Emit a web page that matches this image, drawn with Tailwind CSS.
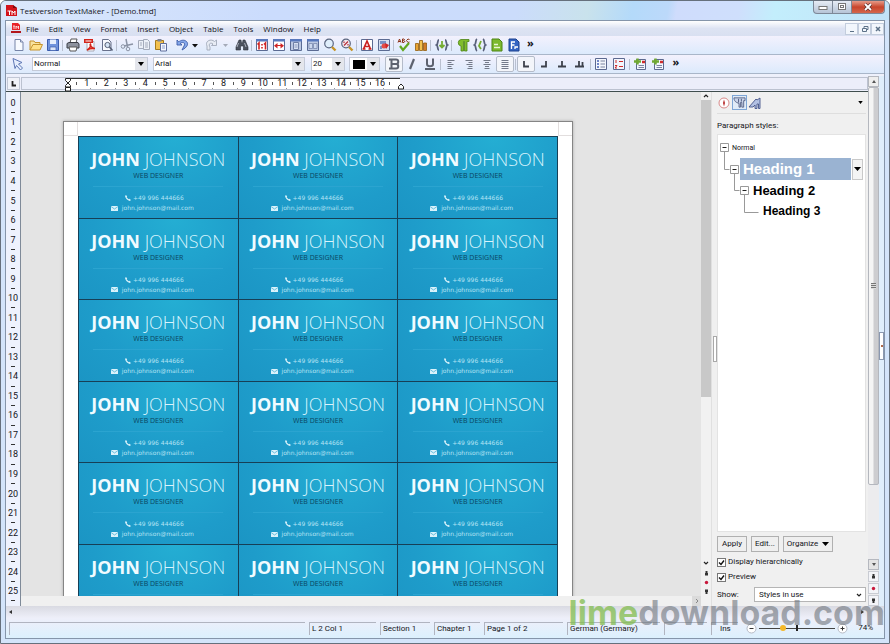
<!DOCTYPE html>
<html lang="en">
<head>
<meta charset="utf-8">
<title>Testversion TextMaker - [Demo.tmd]</title>
<script src="https://cdn.jsdelivr.net/npm/@tailwindcss/browser@4"></script>
</head>
<body class="bg-white font-['Open_Sans',sans-serif] text-[8px] leading-3 text-[#14141a]">
<div class="relative flex h-screen flex-col overflow-hidden rounded-t-md border border-[#66707c] bg-[#d3e4fa] pr-[4px] pb-[4px] pl-[4px]">

  <header class="-mx-1 flex h-[19px] shrink-0 items-center bg-[linear-gradient(100deg,#dbe8fb_0%,#cbdcfd_30%,#cbdcfb_58%,#c9e2ec_66%,#b4dafa_71%,#bcd9fa_75%,#cfdcfc_76%,#cfdffc_83%,#c3eefc_87%,#c2e3f8_100%)] pl-[5px]">
    <svg class="h-[11px] w-[11px]" viewBox="0 0 11 11"><path d="M0 0h7l4 3v8H0z" fill="#d3131b"/><path d="M7 0l4 3H7z" fill="#7d0a0e"/><path d="M1.500 6h4M3.500 6v4M6 10V6l1.500 2L9 6v4" stroke="#fff" fill="none"/></svg>
    <h1 class="ml-[3px] text-[8px]">Testversion TextMaker - [Demo.tmd]</h1>
    <div class="mr-[4px] ml-auto flex h-[13px] self-start rounded-b-sm border border-t-0 border-[#7d8897] bg-linear-to-b from-[#e6ecf4] to-[#b6c4d6]">
      <button aria-label="Minimize" class="flex w-[19px] items-center justify-center border-r border-[#7d8897]"><svg class="h-2 w-3" viewBox="0 0 12 8"><rect x="2" y="3.500" width="8" height="3" fill="#fff" stroke="#777"/></svg></button>
      <button aria-label="Restore" class="flex w-[19px] items-center justify-center border-r border-[#7d8897]"><svg class="h-2 w-3" viewBox="0 0 12 8"><rect x="2.500" y=".5" width="7" height="6" fill="#fff" stroke="#777"/><rect x="4.500" y="2.500" width="3" height="2" fill="#fff" stroke="#777"/></svg></button>
      <button aria-label="Close" class="flex w-[32px] items-center justify-center rounded-br-sm bg-linear-to-b from-[#e59a88] via-[#c8442b] to-[#d4664c]"><svg class="h-2 w-3" viewBox="0 0 12 8"><path d="M3 1l6 6M9 1L3 7" stroke="#5a3030" stroke-width="3.200"/><path d="M3 1l6 6M9 1L3 7" stroke="#fff" stroke-width="1.800"/></svg></button>
    </div>
  </header>

  <div class="flex min-h-0 flex-1 flex-col border border-[#8595aa] bg-[#eef1fc]">
    <nav class="flex h-[15px] shrink-0 items-center bg-linear-to-b from-white via-[#dde3f3] to-[#d9e0f1] pl-[5px]" aria-label="Menu">
      <svg class="mr-[5px] h-[11px] w-[10px]" viewBox="0 0 10 11"><path d="M1 0h6l2 2v5H1z" fill="#e8242a"/><path d="M0 8h10v2H0z" fill="#b3151b"/><path d="M2 3h2M3 3v3M5 6V3l1.200 1.500L7.500 3v3" stroke="#fff" stroke-width=".8" fill="none"/></svg>
      <div class="flex gap-[10px]">
        <a href="#">File</a><a href="#">Edit</a><a href="#">View</a><a href="#">Format</a><a href="#">Insert</a><a href="#">Object</a><a href="#">Table</a><a href="#">Tools</a><a href="#">Window</a><a href="#">Help</a>
      </div>
      <div class="ml-auto flex text-[#5d7288]">
        <button aria-label="Minimize document" class="flex h-3 w-[13px] items-center justify-center border border-[#c3cddd] bg-[#f2f6fc]"><svg class="h-2 w-2" viewBox="0 0 8 8"><path d="M2 6.500h4" stroke="currentColor"/></svg></button>
        <button aria-label="Restore document" class="flex h-3 w-[13px] items-center justify-center border border-[#c3cddd] bg-[#f2f6fc]"><svg class="h-2 w-2" viewBox="0 0 8 8"><path d="M3 3V1.500h4v3H5.500M1.500 3.500h4v3h-4z" fill="none" stroke="currentColor"/></svg></button>
        <button aria-label="Close document" class="flex h-3 w-[13px] items-center justify-center border border-[#c3cddd] bg-[#f2f6fc]"><svg class="h-2 w-2" viewBox="0 0 8 8"><path d="M2 2l4 4M6 2L2 6" stroke="currentColor" stroke-width="1.500"/></svg></button>
      </div>
    </nav>

    <div role="toolbar" aria-label="Standard" class="flex h-[19px] shrink-0 items-center border-b border-[#a9b6c9] bg-linear-to-b from-[#f3f1fd] to-[#dceafc] pl-[4px] [&>button]:flex [&>button]:h-4 [&>button]:w-[17px] [&>button]:items-center [&>button]:justify-center [&>i]:mx-[1px] [&>i]:h-[11px] [&>i]:w-px [&>i]:bg-[#b9c0cf] [&_svg]:h-[14px] [&_svg]:w-[14px]">
      <button aria-label="New"><svg viewBox="0 0 14 14"><path d="M3 1.500h5.500l2.500 2.500v8.500H3z" fill="#f8faff" stroke="#7684a8"/><path d="M8.500 1.500V4H11" fill="#dfe6f5" stroke="#7684a8"/></svg></button>
      <button aria-label="Open"><svg viewBox="0 0 14 14"><path d="M1 12V3h4l1 1.500h5V7" fill="#f8e3a0" stroke="#c6942e"/><path d="M1 12l3-5.500h9.500L11 12z" fill="#ffe28a" stroke="#c6942e"/></svg></button>
      <button aria-label="Save"><svg viewBox="0 0 14 14"><path d="M1.500 1.500h11v11h-11z" fill="#6f93dc" stroke="#3a5cae"/><path d="M4 1.500h6V6H4z" fill="#e5eefc"/><path d="M4 9h6v3.500H4z" fill="#dce6f8" stroke="#3a5cae" stroke-width=".7"/></svg></button>
      <i></i>
      <button aria-label="Print"><svg viewBox="0 0 14 14"><path d="M4 5l1-4h6l-1 4" fill="#fff" stroke="#555"/><path d="M1 5.500l2-1h9l1 1.500v4H1z" fill="#8d929e" stroke="#3b3e47"/><path d="M3 9h8l-1 4H4z" fill="#fff" stroke="#555"/></svg></button>
      <button aria-label="Export PDF"><svg viewBox="0 0 14 14"><path d="M4 3.500h7V13H4z" fill="#fff" stroke="#a9a9b5"/><path d="M1 1h9v4H1z" fill="#d3241c"/><path d="M4 12c3-2 4.500-4 3.500-6-1.500 1 1.500 4.500 4.500 4.500-3-.3-5.500 0-8 1.500z" fill="none" stroke="#d3241c" stroke-width="1.500"/><path d="M2.500 3h6" stroke="#fff"/></svg></button>
      <button aria-label="Print preview"><svg viewBox="0 0 14 14"><path d="M2.500 1.500h6L11 4v8.500H2.500z" fill="#f8faff" stroke="#68718c"/><circle cx="7.500" cy="7" r="2.600" fill="#d5e4f5" stroke="#555f75"/><path d="M9.500 9l3 3.500" stroke="#555f75" stroke-width="1.600"/></svg></button>
      <i></i>
      <button aria-label="Cut"><svg viewBox="0 0 14 14" fill="none" stroke="#8b93a5"><path d="M6 1l1.500 8M13 6L4 8" stroke-width="1.500"/><circle cx="3" cy="8.500" r="1.800"/><circle cx="8" cy="11" r="1.800"/></svg></button>
      <button aria-label="Copy"><svg viewBox="0 0 14 14" fill="#eceff7" stroke="#a4aaba"><path d="M1.500 2.500h5v8h-5zM6.500 1.500h4l2 2v8h-6z"/><path d="M8 5h3M8 7h3M8 9h3M3 5h2M3 7h2"/></svg></button>
      <button aria-label="Paste"><svg viewBox="0 0 14 14"><path d="M1.500 2.500h8v9h-8z" fill="#f2c04e" stroke="#a57a1d"/><path d="M3.500 1h4v2.500h-4z" fill="#7e869b"/><path d="M6.500 5.500h6V13h-6z" fill="#f5f8ff" stroke="#5f6f9c"/><path d="M8 8h3M8 10h3" stroke="#8fa0cd"/></svg></button>
      <button aria-label="Undo" class="ml-1"><svg viewBox="0 0 14 14"><path d="M2 2v5h5L5.200 5.300C8 3.500 11 5 9 8l-2 4c5-2.500 7-6 4.500-8.500C9.500 1.500 6 2 3.800 3.800z" fill="#86a8ea" stroke="#3d5ca8" stroke-width=".9"/></svg></button>
      <button aria-label="Undo list" class="-mx-1"><svg viewBox="0 0 14 14"><path d="M4 6h6l-3 3.500z" fill="#111"/></svg></button>
      <button aria-label="Redo" class="ml-1"><svg viewBox="0 0 14 14"><path d="M2 12V8C0 4 4 1 8 2.500l1.500 1L11.500 2v5.500h-5L8 6C5.500 4 3 6 5 9v3z" fill="#e7ebf4" stroke="#a2a9b9" stroke-width=".9"/></svg></button>
      <button aria-label="Redo list" class="-mx-1"><svg viewBox="0 0 14 14"><path d="M5 6h5L7.500 9z" fill="#a4aab8"/></svg></button>
      <button aria-label="Search" class="ml-[4px]"><svg viewBox="0 0 14 14"><path d="M4 2h2l.5 3h1L8 2h2l3 7v3H8.500V8h-3v4H1V9z" fill="#4d5360" stroke="#2d313a" stroke-width=".6"/><path d="M3.500 5L2 9M9.500 5L11 9" stroke="#aab0bd"/></svg></button>
      <i></i>
      <button aria-label="Original size"><svg viewBox="0 0 14 14"><path d="M1.500 1.500h11v11h-11z" fill="#fff" stroke="#5b6b93"/><path d="M1 1h12v2.500H1z" fill="#5878bd"/><path d="M2.500 6.500L4 5v6.500M9 6.500L10.500 5v6.500M7 6v1.500M7 9v1.500" stroke="#d02424" stroke-width="1.600" fill="none"/></svg></button>
      <button aria-label="Fit width"><svg viewBox="0 0 14 14"><path d="M1.500 1.500h11v11h-11z" fill="#fff" stroke="#5b6b93"/><path d="M1 1h12v2.500H1z" fill="#5878bd"/><path d="M5.500 5v5.500L2 7.700zM8.500 5v5.500L12 7.700z" fill="#d02424"/><path d="M3 7.500h8" stroke="#d02424"/></svg></button>
      <button aria-label="Fit page"><svg viewBox="0 0 14 14"><path d="M1.500 1.500h11v11h-11z" fill="#bcc8e2" stroke="#5b6b93"/><path d="M1 1h12v2.500H1z" fill="#5878bd"/><path d="M4.500 4.500h5v7h-5z" fill="#d9e2f3" stroke="#7080a6"/><path d="M5.500 7h3M5.500 9h3" stroke="#8c9abd"/></svg></button>
      <button aria-label="Two pages"><svg viewBox="0 0 14 14"><path d="M1.500 1.500h11v11h-11z" fill="#bcc8e2" stroke="#5b6b93"/><path d="M1 1h12v2.500H1z" fill="#5878bd"/><path d="M3 5.500h3.500v5H3zM7.500 5.500H11v5H7.500z" fill="#cdd8ee" stroke="#7080a6" stroke-width=".7"/></svg></button>
      <button aria-label="Zoom"><svg viewBox="0 0 14 14"><circle cx="6" cy="5.500" r="4.300" fill="#dfeefb" stroke="#5b6680" stroke-width="1.200"/><path d="M9 9l3.500 3.500" stroke="#c79325" stroke-width="2.400"/></svg></button>
      <button aria-label="Zoom level"><svg viewBox="0 0 14 14"><circle cx="6" cy="5.500" r="4.300" fill="#f3e9ee" stroke="#5b6680" stroke-width="1.200"/><path d="M4 7.500l4-4M4 3.500v1.500M8 6v1.500" stroke="#b52e38" stroke-width="1.200"/><path d="M9 9l3.500 3.500" stroke="#c79325" stroke-width="2.400"/></svg></button>
      <i></i>
      <button aria-label="Text frame"><svg viewBox="0 0 14 14"><path d="M1.500 1.500h11v11h-11z" fill="#fff" stroke="#5b6b93"/><path d="M3.500 11L7 3l3.500 8M5 8.500h4M2.500 11h3M8.500 11h3" stroke="#cb2020" stroke-width="1.700" fill="none"/></svg></button>
      <button aria-label="Picture frame"><svg viewBox="0 0 14 14"><path d="M1.500 1.500h11v11h-11z" fill="#d5def0" stroke="#5b6b93"/><path d="M3 3h6v3H3zM3 8h2v3H3z" fill="#7791c6"/><circle cx="7" cy="8" r="2.500" fill="#e34c46"/><path d="M8 5l4 2-3 4z" fill="#d02424"/></svg></button>
      <i></i>
      <button aria-label="Spelling"><svg viewBox="0 0 14 14"><path d="M1 4.500L2.500 1 4 4.500M1.500 3.500h2M5.500 1v3.500h1.500L8 3.500 6.500 2.700 7.500 1.500 7 1zM12.500 1.500L11 1l-1.500 1.500L11 4.500l1.500-.5" fill="none" stroke="#8c3218"/><path d="M3 8l3 4 6-7" fill="none" stroke="#63a821" stroke-width="2.200"/></svg></button>
      <button aria-label="Chart"><svg viewBox="0 0 14 14"><path d="M1.500 5.500h3v7h-3z" fill="#e8a434" stroke="#925d0e" stroke-width=".8"/><path d="M5.500 2.500h3v10h-3z" fill="#f2c14c" stroke="#925d0e" stroke-width=".8"/><path d="M9.500 5h3v7.500h-3z" fill="#d27c28" stroke="#925d0e" stroke-width=".8"/></svg></button>
      <i></i>
      <button aria-label="Update fields" class="ml-px"><svg viewBox="0 0 14 14" fill="none" stroke="#58607a" stroke-width="1.800"><path d="M4 2C2 2 3.500 6 1.500 7 3.500 8 2 12 4 12M10 2c2 0 .5 4 2.500 5-2 1-.5 5-2.500 5"/><path d="M7 3v6M4.500 7L7 9.500 9.500 7" stroke="#76ac32"/></svg></button>
      <i></i>
      <button aria-label="Show paragraph marks" class="ml-px"><svg viewBox="0 0 14 14"><path d="M13 1.500H5a3.300 3.300 0 0 0 0 6.500v5h2.500V3.500h1V13H11V3.500h2z" fill="#80bd2b" stroke="#4d8415" stroke-width=".8"/></svg></button>
      <button aria-label="Show fields"><svg viewBox="0 0 14 14" fill="none" stroke="#58607a" stroke-width="1.800"><path d="M4 1C2 2 3.500 6 1.500 7 3.500 8 2 12 4 13M10 1c2 1 .5 5 2.500 6-2 1-.5 5-2.500 6"/><path d="M8 3L6 8l2 3" stroke="#76ac32"/></svg></button>
      <button aria-label="PlanMaker"><svg viewBox="0 0 14 14"><path d="M2 1h7l3 3v9H2z" fill="#7cb92d" stroke="#4d8415"/><path d="M4 6.500h4M4 9.500h6" stroke="#e8f6d2" stroke-width="1.600"/></svg></button>
      <button aria-label="Presentations"><svg viewBox="0 0 14 14"><path d="M2 1h7l3 3v9H2z" fill="#3465c2" stroke="#1c408d"/><path d="M4.500 11V4H8M4.500 7h3M8 11V9h3" fill="none" stroke="#fff" stroke-width="1.300"/></svg></button>
      <button aria-label="More buttons" class="pb-[5px] text-[11px] font-bold">»</button>
    </div>

    <div role="toolbar" aria-label="Formatting" class="flex h-[19px] shrink-0 items-center border-b border-[#a9b6c9] bg-linear-to-b from-[#f3f1fd] to-[#dceafc] pl-[3px] [&>button]:flex [&>button]:h-4 [&>button]:w-[18px] [&>button]:items-center [&>button]:justify-center [&>i]:mx-[1px] [&>i]:h-[11px] [&>i]:w-px [&>i]:bg-[#b9c0cf] [&>button>svg]:h-[14px] [&>button>svg]:w-[14px]">
      <button aria-label="Object mode"><svg viewBox="0 0 14 14"><path d="M2 1.500l9 4-3.500 1.500 4 4-2 2-4-4.500L4 11.500z" fill="#e6edfc" stroke="#5d76b4"/></svg></button>
      <label class="ml-[5px] grid w-[116px] items-center border border-[#c4cad8] bg-white"><select aria-label="Paragraph style" class="col-start-1 row-start-1 h-3 w-full appearance-none pl-px font-['Roboto',sans-serif]"><option>Normal</option></select><span class="pointer-events-none col-start-1 row-start-1 flex h-3 w-3 items-center justify-center justify-self-end bg-[#e4e6ec]"><svg class="h-1 w-[6px]" viewBox="0 0 6 4"><path d="M0 0h6L3 4z"/></svg></span></label>
      <label class="ml-[5px] grid w-[152px] items-center border border-[#c4cad8] bg-white"><select aria-label="Font" class="col-start-1 row-start-1 h-3 w-full appearance-none pl-px font-['Roboto',sans-serif]"><option>Arial</option></select><span class="pointer-events-none col-start-1 row-start-1 flex h-3 w-3 items-center justify-center justify-self-end bg-[#e4e6ec]"><svg class="h-1 w-[6px]" viewBox="0 0 6 4"><path d="M0 0h6L3 4z"/></svg></span></label>
      <label class="ml-[6px] grid w-[34px] items-center border border-[#c4cad8] bg-white"><select aria-label="Font size" class="col-start-1 row-start-1 h-3 w-full appearance-none pl-px font-['Roboto',sans-serif]"><option>20</option></select><span class="pointer-events-none col-start-1 row-start-1 flex h-3 w-3 items-center justify-center justify-self-end bg-[#e4e6ec]"><svg class="h-1 w-[6px]" viewBox="0 0 6 4"><path d="M0 0h6L3 4z"/></svg></span></label>
      <label class="ml-[4px] grid w-[31px] items-center border border-[#c4cad8] bg-white"><select aria-label="Text color" class="col-start-1 row-start-1 h-3 w-full appearance-none text-transparent"><option></option></select><span class="pointer-events-none col-start-1 row-start-1 ml-[3px] h-[9px] w-[12px] bg-black"></span><span class="pointer-events-none col-start-1 row-start-1 flex h-3 w-3 items-center justify-center justify-self-end bg-[#e4e6ec]"><svg class="h-1 w-[6px]" viewBox="0 0 6 4"><path d="M0 0h6L3 4z"/></svg></span></label>
      <button aria-label="Bold" class="ml-[5px] rounded-xs border border-[#b4bbc9] bg-[#f3f5fa]"><svg viewBox="0 0 14 14"><path d="M2 2.500h7a2 2 0 0 1 0 4.500H5.500 9a2.200 2.200 0 0 1 0 4.500H2M4.500 2.500v9" fill="none" stroke="#5d626f" stroke-width="2"/></svg></button>
      <button aria-label="Italic"><svg viewBox="0 0 14 14"><path d="M9 2L5 12" stroke="#5d626f" stroke-width="2.200"/></svg></button>
      <button aria-label="Underline"><svg viewBox="0 0 14 14"><path d="M4 1.500V7c0 3 6 3 6 0V1.500M2 12h10" fill="none" stroke="#5d626f" stroke-width="2"/></svg></button>
      <i></i>
      <button aria-label="Align left"><svg viewBox="0 0 14 14" stroke="#747a89"><path d="M3.500 3.500h7M3.500 5.500h4M3.500 7.500h6M3.500 9.500h4M3.500 11.500h5"/></svg></button>
      <button aria-label="Align right"><svg viewBox="0 0 14 14" stroke="#747a89"><path d="M3.500 3.500h7M6.500 5.500h4M4.500 7.500h6M6.500 9.500h4M5.500 11.500h5"/></svg></button>
      <button aria-label="Center"><svg viewBox="0 0 14 14" stroke="#747a89"><path d="M3.500 3.500h7M5 5.500h4M3.500 7.500h7M5 9.500h4M4.500 11.500h5"/></svg></button>
      <button aria-label="Justify" class="rounded-xs border border-[#b4bbc9] bg-[#f3f5fa]"><svg viewBox="0 0 14 14" stroke="#747a89"><path d="M3.500 3.500h7M3.500 5.500h7M3.500 7.500h7M3.500 9.500h7M3.500 11.500h7"/></svg></button>
      <i></i>
      <button aria-label="Left tab" class="rounded-xs border border-[#b4bbc9] bg-[#f3f5fa]"><svg viewBox="0 0 14 14"><path d="M5 4v5.500h5" fill="none" stroke="#3d414b" stroke-width="1.800"/></svg></button>
      <button aria-label="Right tab"><svg viewBox="0 0 14 14"><path d="M9 4v5.500H4" fill="none" stroke="#3d414b" stroke-width="1.800"/></svg></button>
      <button aria-label="Center tab"><svg viewBox="0 0 14 14"><path d="M7 4v5.500M3 9.500h8" fill="none" stroke="#3d414b" stroke-width="1.800"/></svg></button>
      <button aria-label="Decimal tab"><svg viewBox="0 0 14 14"><path d="M6 4v5.500M2 9.500h9M9.500 5v4" fill="none" stroke="#3d414b" stroke-width="1.800"/></svg></button>
      <i></i>
      <button aria-label="Bullets"><svg viewBox="0 0 14 14"><path d="M1.500 1.500h11v11h-11z" fill="#f3f6fd" stroke="#5c6990"/><path d="M3 4h2M3 7h2M3 10h2" stroke="#4562b5" stroke-width="1.500"/><path d="M6.500 4h4.500M6.500 7H11M6.500 10H11" stroke="#7b84a0"/></svg></button>
      <button aria-label="Numbering"><svg viewBox="0 0 14 14"><path d="M1.500 1.500h11v11h-11z" fill="#f3f6fd" stroke="#5c6990"/><path d="M4 3v3M3 8.500h2L3 11h2" stroke="#cf2c2c" fill="none"/><path d="M7 4.500h4M7 9.500h4" stroke="#cf2c2c"/></svg></button>
      <i></i>
      <button aria-label="Decrease level"><svg viewBox="0 0 14 14"><path d="M3.500 2.500h9v10h-9z" fill="#f3f6fd" stroke="#5c6990"/><path d="M5.500 8.500h5.500M5.500 10.500h5.500" stroke="#7b84a0"/><path d="M9 5h3" stroke="#cf2c2c" stroke-width="2.500"/><path d="M4.500 1.500v6M1 4.500h7" stroke="#6fa832" stroke-width="2.500"/></svg></button>
      <button aria-label="Increase level"><svg viewBox="0 0 14 14"><path d="M3.500 2.500h9v10h-9z" fill="#f3f6fd" stroke="#5c6990"/><path d="M5.500 8.500h5.500M5.500 10.500h5.500" stroke="#7b84a0"/><path d="M9 5h3" stroke="#cf2c2c" stroke-width="2.500"/><path d="M4.500 1.500v6M1 4.500h7" stroke="#6fa832" stroke-width="2.500"/></svg></button>
      <button aria-label="More formatting" class="pb-[5px] text-[11px] font-bold">»</button>
    </div>

    <div class="flex min-h-0 flex-1 pt-[2px]">
      <div class="flex min-w-0 flex-1 flex-col">
        <div class="flex h-4 shrink-0 border-b border-[#3f4d4d] bg-[#eceefa]">
          <button aria-label="Tab type" class="m-px flex w-[13px] items-center justify-center border border-[#c1c7d5] bg-[#f0f2f8]"><svg class="h-2 w-2" viewBox="0 0 8 8"><path d="M2.500 1v4.500H6" fill="none" stroke="#222" stroke-width="1.800"/></svg></button>
          <div class="my-px flex flex-1 border border-[#bcc2d0]">
            <div class="w-[45px] bg-[#e9edf9]"></div>
            <div class="flex w-[333px] flex-col border-t border-[#333] bg-white">
              <div id="hruler" class="flex h-2 pr-[5px] pl-[5px] font-['Roboto',sans-serif] text-[9px] leading-[9px]"></div>
              <div id="htabs" class="flex h-1 overflow-hidden pt-px"></div>
            </div>
          </div>
        </div>

        <div class="flex min-h-0 flex-1">
          <div id="vruler" class="flex w-[15px] shrink-0 flex-col border-r border-[#7f8a98] bg-[#eef2fd] pt-[6px] text-center font-['Roboto',sans-serif] text-[9px]"></div>

          <main class="flex min-w-0 flex-1 flex-col bg-[#e4e4e4]">
            <div class="min-h-0 flex-1 overflow-hidden pt-[29px] pl-[42px]">
              <article class="w-[510px] border border-[#858585] bg-white px-[14px] shadow-[0_0_3px_#aaa]">
                <div class="-mx-[14px] flex h-[14px] justify-between"><span class="w-[14px] border-r border-b border-[#e2dede]"></span><span class="w-[14px] border-b border-l border-[#e2dede]"></span></div>
                <div id="cards" class="grid h-[490px] grid-cols-3 grid-rows-6 border-t border-l border-[#173f56]"></div>
              </article>
            </div>
            <div class="flex h-[10px] shrink-0 justify-end bg-[#f0f0f0]"><button aria-label="Scroll right" class="flex w-[9px] items-center justify-center bg-[#dadada]"><svg class="h-[6px] w-[6px]" viewBox="0 0 6 6"><path d="M2 1l2 2-2 2" fill="none" stroke="#888"/></svg></button></div>
          </main>

          <div class="flex w-[10px] shrink-0 flex-col items-center bg-[#f1f1f1]">
            <button aria-label="Scroll up" class="flex h-2 items-center"><svg class="h-[6px] w-[6px]" viewBox="0 0 6 6"><path d="M1 4l2-2 2 2" fill="none" stroke="#222" stroke-width="1.200"/></svg></button>
            <div class="h-[297px] w-full bg-[#c8c8c8]"></div>
            <div class="mt-auto flex flex-col items-center pb-[10px]">
              <button aria-label="Scroll down" class="mb-[3px]"><svg class="h-[6px] w-[6px]" viewBox="0 0 6 6"><path d="M1 2l2 2 2-2" fill="none" stroke="#222" stroke-width="1.200"/></svg></button>
              <button aria-label="Previous" class="flex h-[9px] items-center"><svg class="h-[5px] w-[5px]" viewBox="0 0 5 5"><path d="M1.500 0h2v2H4v2.500H1V2h.5z" fill="#333"/></svg></button>
              <button aria-label="Browse by" class="flex h-[9px] items-center"><svg class="h-[5px] w-[5px]" viewBox="0 0 5 5"><circle cx="2.500" cy="2.500" r="1.700" fill="#c8183c"/></svg></button>
              <button aria-label="Next" class="flex h-[9px] items-center"><svg class="h-[5px] w-[5px]" viewBox="0 0 5 5"><path d="M1 .5h3V3h-.5v2h-2V3H1z" fill="#333"/></svg></button>
            </div>
          </div>

          <aside class="flex w-[157px] shrink-0 bg-[#f0f0f0] font-['Roboto',sans-serif]" aria-label="Paragraph styles">
            <div class="flex w-[6px] items-center justify-center border-l border-[#e0e0e0]"><div class="h-[26px] w-[4px] border border-[#a9a9a9] bg-white"></div></div>
            <div class="flex min-w-0 flex-1 flex-col pr-[2px]">
              <div class="flex h-[22px] shrink-0 items-center gap-px border-b border-[#dedede] pr-[3px]">
                <button aria-label="Navigator"><svg class="h-[14px] w-[14px]" viewBox="0 0 14 14"><circle cx="7" cy="7" r="5" fill="#fff" stroke="#d98b8b"/><path d="M7 3.500l1 3.500-1 3.500L6 7z" fill="#b72a2a"/></svg></button>
                <button aria-label="Paragraph styles" class="border border-[#7ea6d6] bg-[#e0ebf8]"><svg class="h-[13px] w-[13px]" viewBox="0 0 14 14"><path d="M1 2h12v3h-1.500v7h-2V7H8v5H6.500V8L4 7C2 6 1 4 1 2z" fill="#c9d4ea" stroke="#4b577c" stroke-width=".9"/><path d="M6 3v4M9 3v3" stroke="#4b577c"/></svg></button>
                <button aria-label="Character styles"><svg class="h-[14px] w-[14px]" viewBox="0 0 14 14"><path d="M1 11l7-8 1 1 3-2v10.500h-1.500V8H9v4.500H7V9L5 11z" fill="#b2c0e2" stroke="#45558a" stroke-width=".9"/></svg></button>
                <button aria-label="Panel menu" class="ml-auto"><svg class="h-[3px] w-[5px]" viewBox="0 0 6 4"><path d="M0 0h6L3 4z"/></svg></button>
              </div>
              <h2 class="mt-[6px] mb-[2px] shrink-0">Paragraph styles:</h2>
              <div role="tree" class="min-h-0 flex-1 border border-[#e3e3e3] bg-white pt-[2px] font-['Liberation_Sans',sans-serif] font-bold">
                <div role="treeitem" class="flex h-[21px] items-center pl-[1px]"><svg class="h-[21px] w-[11px]" viewBox="0 0 11 21"><path d="M5.500 14v7" stroke="#999"/><path d="M1.500 6.500h8v8h-8z" fill="#fff" stroke="#999"/><path d="M3.500 10.500h4" stroke="#222"/></svg><span class="ml-[2px] font-['Roboto',sans-serif] text-[7px] font-normal">Normal</span></div>
                <div role="treeitem" aria-selected="true" class="flex h-[22px] items-center pl-[6px]"><svg class="h-[22px] w-[16px]" viewBox="0 0 16 22"><path d="M.5 0v11.500h5M10.500 15v7" stroke="#999" fill="none"/><path d="M6.500 7.500h8v8h-8z" fill="#fff" stroke="#999"/><path d="M8.500 11.500h4" stroke="#222"/></svg><span class="h-[22px] flex-1 bg-[#9ab3d2] pl-[3px] text-[15px] leading-[22px] text-white">Heading 1</span><button aria-label="Style menu" class="mr-[2px] ml-[1px] flex h-[21px] w-[11px] items-center justify-center border border-[#c9c9c9] bg-[#f4f4f4]"><svg class="h-1 w-[7px]" viewBox="0 0 7 4"><path d="M0 0h7L3.500 4z"/></svg></button></div>
                <div role="treeitem" class="flex h-[21px] items-center pl-[16px]"><svg class="h-[21px] w-[16px]" viewBox="0 0 16 21"><path d="M.5 0v10.500h5M10.500 14v7" stroke="#999" fill="none"/><path d="M6.500 6.500h8v8h-8z" fill="#fff" stroke="#999"/><path d="M8.500 10.500h4" stroke="#222"/></svg><span class="ml-[3px] text-[13px] leading-[21px] text-black">Heading 2</span></div>
                <div role="treeitem" class="flex h-[21px] items-center pl-[26px]"><svg class="h-[21px] w-[16px]" viewBox="0 0 16 21"><path d="M.5 0v11.500h14" stroke="#999" fill="none"/></svg><span class="ml-[3px] text-[12px] leading-[21px] text-black">Heading 3</span></div>
              </div>
              <div class="mt-[4px] flex shrink-0 gap-[4px]">
                <button class="h-[16px] w-[30px] border border-[#b0b0b0] bg-[#efefef]">Apply</button>
                <button class="h-[16px] w-[28px] border border-[#b0b0b0] bg-[#efefef]">Edit...</button>
                <button class="flex h-[16px] w-[50px] items-center justify-center gap-1 border border-[#b0b0b0] bg-[#efefef]">Organize <svg class="h-1 w-[7px]" viewBox="0 0 7 4"><path d="M0 0h7L3.500 4z"/></svg></button>
              </div>
              <label class="mt-[4px] flex h-3 shrink-0 items-center gap-[2px]"><span class="grid"><input type="checkbox" checked class="col-start-1 row-start-1 h-[9px] w-[9px] appearance-none border border-[#777] bg-white"><svg class="pointer-events-none col-start-1 row-start-1 h-[9px] w-[9px]" viewBox="0 0 9 9"><path d="M2 4.500l2 2 3-4" fill="none" stroke="#111" stroke-width="1.400"/></svg></span>Display hierarchically</label>
              <label class="mt-[3px] flex h-3 shrink-0 items-center gap-[2px]"><span class="grid"><input type="checkbox" checked class="col-start-1 row-start-1 h-[9px] w-[9px] appearance-none border border-[#777] bg-white"><svg class="pointer-events-none col-start-1 row-start-1 h-[9px] w-[9px]" viewBox="0 0 9 9"><path d="M2 4.500l2 2 3-4" fill="none" stroke="#111" stroke-width="1.400"/></svg></span>Preview</label>
              <div class="mt-[4px] mb-[4px] flex shrink-0 items-center"><label for="show" class="w-[37px]">Show:</label><span class="grid flex-1 items-center border border-[#b5b5b5] bg-white"><select id="show" class="col-start-1 row-start-1 h-[13px] w-full appearance-none pl-1"><option>Styles in use</option></select><svg class="pointer-events-none col-start-1 row-start-1 mr-[3px] h-[6px] w-[6px] justify-self-end" viewBox="0 0 6 6"><path d="M1 2l2 2 2-2" fill="none" stroke="#222" stroke-width="1.200"/></svg></span></div>
            </div>
          </aside>
        </div>
      </div>

      <div class="flex w-[11px] shrink-0 flex-col bg-[#ececee]">
        <button aria-label="Window scroll up" class="flex h-[11px] items-center justify-center border border-[#b5b8bf] bg-[#eee]"><svg class="h-[3px] w-[4px]" viewBox="0 0 4 3"><path d="M0 3h4L2 0z" fill="#555"/></svg></button>
        <div class="flex h-[398px] items-center justify-center rounded-xs border border-[#b4b7be] bg-linear-to-r from-[#f5f5f5] from-40% to-[#cdcdd0] to-60%"><div class="h-[6px] w-[5px] bg-[repeating-linear-gradient(#777_0_1px,#ddd_1px_2px)]"></div></div>
        <div class="mt-auto flex flex-col gap-[1px]">
          <button aria-label="Window scroll down" class="flex h-[11px] items-center justify-center border border-[#b5b8bf] bg-[#e4e4e4]"><svg class="h-[3px] w-[4px]" viewBox="0 0 4 3"><path d="M0 0h4L2 3z" fill="#555"/></svg></button>
          <button aria-label="Previous page" class="flex h-[11px] items-center justify-center border border-[#c9ccd3] bg-[#f3f4f8]"><svg class="h-[5px] w-[5px]" viewBox="0 0 5 5"><path d="M1.500 0h2v2H4v2.500H1V2h.5z" fill="#333"/></svg></button>
          <button aria-label="Browse pages" class="flex h-[11px] items-center justify-center border border-[#c9ccd3] bg-[#f3f4f8]"><svg class="h-[5px] w-[5px]" viewBox="0 0 5 5"><circle cx="2.500" cy="2.500" r="1.700" fill="#c8183c"/></svg></button>
          <button aria-label="Next page" class="flex h-[11px] items-center justify-center border border-[#c9ccd3] bg-[#f3f4f8]"><svg class="h-[5px] w-[5px]" viewBox="0 0 5 5"><path d="M1 .5h3V3h-.5v2h-2V3H1z" fill="#333"/></svg></button>
        </div>
      </div>
      <div class="flex w-[5px] shrink-0 items-center bg-[#dfeefc] pt-[10px]"><div class="flex h-[28px] w-[5px] items-center justify-center border border-[#8b98b0] bg-white"><span class="h-[2px] w-[2px] bg-[#b06a4a]"></span></div></div>
    </div>

    <div class="flex h-[12px] shrink-0 items-center justify-between bg-linear-to-b from-[#d9dae2] to-[#eeeff9] pr-[20px] pl-[3px]">
      <svg class="h-1 w-[3px]" viewBox="0 0 3 4"><path d="M3 0v4L0 2z" fill="#333"/></svg>
      <svg class="h-1 w-[3px]" viewBox="0 0 3 4"><path d="M0 0v4l3-2z" fill="#333"/></svg>
    </div>

    <footer class="flex h-[20px] shrink-0 items-center gap-[4px] bg-linear-to-b from-[#eeeffa] to-[#dcf0fd] pr-[11px] pl-[3px] font-['Roboto',sans-serif] [&>p]:h-[13px] [&>p]:shrink-0 [&>p]:border-t [&>p]:border-l [&>p]:border-[#b0b4c0] [&>p]:pl-[2px] [&>p]:whitespace-nowrap">
      <p class="w-[296px]"></p><p class="w-[67px]">L 2 Col 1</p><p class="w-[50px]">Section 1</p><p class="w-[46px]">Chapter 1</p><p class="w-[79px]">Page 1 of 2</p><p class="w-[93px]">German (Germany)</p><p class="w-[43px]"></p>
      <p class="w-[27px]"><span class="pl-[6px]">Ins</span></p>
      <div class="ml-auto flex items-center">
        <button aria-label="Zoom out"><svg class="h-[11px] w-[11px]" viewBox="0 0 11 11"><circle cx="5.500" cy="5.500" r="4.500" fill="#fff" stroke="#b5bac5"/><path d="M3.500 5.500h4" stroke="#333"/></svg></button>
        <span class="grid w-[80px] items-center"><span class="col-start-1 row-start-1 mx-[2px] h-px bg-[#444]"></span><span class="col-start-1 row-start-1 h-[6px] w-[2px] justify-self-center bg-[#222]"></span><input type="range" aria-label="Zoom" min="0" max="100" value="31" class="col-start-1 row-start-1 h-2 w-full appearance-none bg-transparent [&::-webkit-slider-thumb]:h-[6px] [&::-webkit-slider-thumb]:w-[6px] [&::-webkit-slider-thumb]:appearance-none [&::-webkit-slider-thumb]:rounded-full [&::-webkit-slider-thumb]:bg-[#f5b829]"></span>
        <button aria-label="Zoom in"><svg class="h-[11px] w-[11px]" viewBox="0 0 11 11"><circle cx="5.500" cy="5.500" r="4.500" fill="#fff" stroke="#b5bac5"/><path d="M3.500 5.500h4M5.500 3.500v4" stroke="#333"/></svg></button>
        <output class="ml-[10px]">74%</output>
      </div>
    </footer>
  </div>

  <svg class="pointer-events-none absolute top-[76px] left-[62px] h-[15px] w-[10px]" viewBox="0 0 10 15"><path d="M2.500 1.500h5v2L5 6l-2.500-2.500zM5 6l2.500 2.500v1.500h-5V8.500zM2.500 10.500h5v3.500h-5z" fill="#fff" stroke="#222"/></svg>
  <svg class="pointer-events-none absolute top-[82px] left-[396px] h-[7px] w-[8px]" viewBox="0 0 8 7"><path d="M1.500 6V3.500L4 1l2.500 2.500V6z" fill="#fff" stroke="#222"/></svg>
  <div class="pointer-events-none absolute right-[4px] bottom-[12px] font-['Inter',sans-serif] text-[34px] leading-[36px] font-bold text-[#6e747c]/60"><span class="text-[#83bd4f]/75">lime</span>download.com</div>
</div>

<script>
  const hruler = document.getElementById('hruler');
  for (let n = 1; n <= 17; n++) {
    hruler.innerHTML += '<span class="flex flex-1 basis-0 items-center justify-center"><i class="h-[3px] w-px bg-[#555]"></i></span>';
    if (n < 17) hruler.innerHTML += `<span class="flex w-0 flex-1 basis-0 justify-center">${n}</span>`;
  }
  document.getElementById('htabs').innerHTML = '<span class="flex-1 border-r border-[#999]"></span>'.repeat(13) + '<span class="w-4"></span>';

  const vruler = document.getElementById('vruler');
  for (let n = 0; n <= 25; n++) {
    vruler.innerHTML += `<span class="flex h-0 flex-1 items-center justify-center">${n}</span><span class="flex h-0 flex-1 items-center justify-center"><i class="h-px w-[4px] bg-[#333]"></i></span>`;
  }

  const card = `<section class="flex flex-col items-center overflow-hidden border-r border-b border-[#173f56] bg-[radial-gradient(ellipse_at_60%_0%,#24aed3_0%,#1e9cca_60%,#1b95c4_100%)] pt-[9px] whitespace-nowrap text-[#b4e3f4]">
    <h3 class="text-[18px] leading-[26px] font-light text-[#d9f4fd]"><b class="font-bold text-[#f0fbff]">JOHN</b> JOHNSON</h3>
    <p class="h-[8px] text-[7px] leading-[8px] text-[#0a4560]">WEB DESIGNER</p>
    <hr class="mt-[6px] mb-[6px] w-[130px] border-[#2ba4d0]">
    <p class="-ml-[8px] flex h-[10px] items-center gap-[2px] font-['DejaVu_Sans',sans-serif] text-[6px] leading-[10px]"><svg class="h-[6px] w-[6px]" viewBox="0 0 6 6"><path d="M1 0l1.200 1.500-.6.700 2 2 .7-.5L6 5 4.800 6C2.500 5.500.5 3.500 0 1z" fill="#d9f2fb"/></svg>+49 996 444666</p>
    <p class="-ml-[12px] flex h-[10px] items-center gap-[4px] font-['DejaVu_Sans',sans-serif] text-[6px] leading-[10px]"><svg class="h-[5px] w-[7px]" viewBox="0 0 7 5"><path d="M0 0h7v5H0z" fill="#d9f2fb"/><path d="M0 .5L3.500 3 7 .5" fill="none" stroke="#1e9cca" stroke-width=".6"/></svg>john.johnson@mail.com</p>
  </section>`;
  document.getElementById('cards').innerHTML = card.repeat(18);
</script>
</body>
</html>
